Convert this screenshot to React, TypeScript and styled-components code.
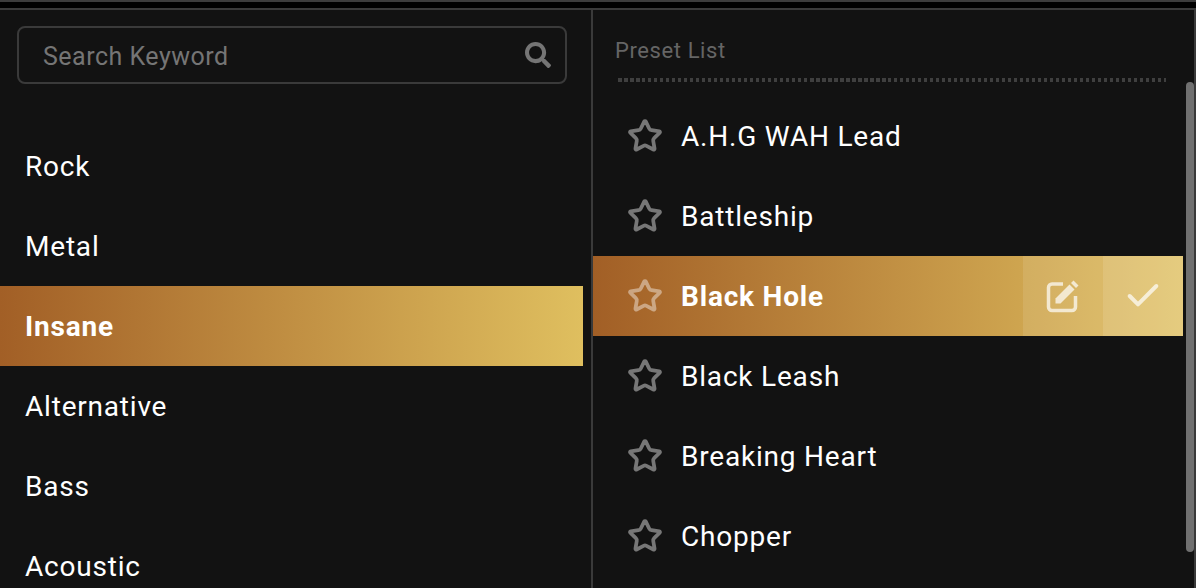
import styled, { createGlobalStyle } from 'styled-components';
import { FaSearch } from 'react-icons/fa';
import { Star, Check } from 'lucide-react';

const GlobalStyle = createGlobalStyle`
  html, body {
    margin: 0;
    height: 588px;
    overflow: hidden;
    background: #000;
    font-family: Roboto, "Liberation Sans", sans-serif;
  }
`;

const categories = ['Rock', 'Metal', 'Insane', 'Alternative', 'Bass', 'Acoustic'];
const presets = ['A.H.G WAH Lead', 'Battleship', 'Black Hole', 'Black Leash', 'Breaking Heart', 'Chopper'];

const Page = styled.div`
  width: 1196px;
  height: 588px;
  overflow: hidden;
  display: flex;
  flex-direction: column;
  box-sizing: border-box;
  border-top: 2px solid #3c3c3c;
  padding-top: 6px;
`;

const Panel = styled.div`
  flex: 1;
  min-height: 0;
  display: grid;
  grid-template-columns: 591px 1fr;
  background: #121212;
  border-top: 2px solid #3a3a3a;
  border-right: 2px solid #3a3a3a;
`;

const LeftColumn = styled.div`
  min-width: 0;
  overflow: hidden;
`;

const SearchBox = styled.div`
  box-sizing: border-box;
  width: 550px;
  height: 58px;
  margin: 16px 0 0 17px;
  padding: 0 14px 0 24px;
  display: flex;
  align-items: center;
  justify-content: space-between;
  border: 2px solid #3a3a3a;
  border-radius: 8px;
  color: #757575;
  font-size: 25px;
  letter-spacing: 0.5px;
`;

const SearchText = styled.span`
  padding-top: 3px;
`;

const CategoryList = styled.div`
  margin-top: 42px;
  width: 583px;
`;

const Row = styled.div<{ $active?: boolean }>`
  height: 80px;
  display: flex;
  align-items: center;
  color: #fff;
  font-size: 28px;
  letter-spacing: 0.8px;
  font-weight: ${(p) => (p.$active ? 700 : 400)};
`;

const CategoryRow = styled(Row)`
  padding-left: 25px;
  background: ${(p) => (p.$active ? 'linear-gradient(90deg, #a25f26 0%, #dfbf5f 100%)' : 'none')};
`;

const RightColumn = styled.div`
  position: relative;
  min-width: 0;
  overflow: hidden;
  border-left: 2px solid #3a3a3a;
`;

const ListHeading = styled.div`
  margin: 29px 0 0 22px;
  height: 24px;
  line-height: 24px;
  color: #656565;
  font-size: 22px;
  letter-spacing: 0.6px;
`;

const DottedRule = styled.div`
  width: 548px;
  height: 4px;
  margin: 15px 0 0 25px;
  background: repeating-linear-gradient(90deg, #3f3f3f 0 3.5px, transparent 3.5px 6px);
`;

const PresetList = styled.div`
  margin-top: 14px;
  width: 590px;
`;

const PresetRow = styled(Row)`
  padding-left: 34px;
  background: ${(p) => (p.$active ? 'linear-gradient(90deg, #a25f26 0%, #dfbf5f 100%)' : 'none')};
`;

const StarIcon = styled(Star)<{ $active?: boolean }>`
  flex: none;
  margin-right: 18px;
  color: ${(p) => (p.$active ? 'rgba(255, 255, 255, 0.42)' : '#777')};
`;

const PresetName = styled.span`
  flex: 1;
`;

const RowAction = styled.div<{ $strong?: boolean }>`
  width: 80px;
  height: 80px;
  display: flex;
  align-items: center;
  justify-content: center;
  color: rgba(255, 255, 255, 0.7);
  background: rgba(255, 255, 255, ${(p) => (p.$strong ? 0.2 : 0.1)});
`;

const ScrollThumb = styled.div`
  position: absolute;
  top: 72px;
  right: 0;
  width: 8px;
  height: 470px;
  border-radius: 4px;
  background: #707070;
`;

const EditIcon = () => (
  <svg width="34" height="34" viewBox="0 0 34 34" fill="none">
    <path
      d="M17 5H6A3.500 3.500 0 0 0 2.500 8.500V28A3.500 3.500 0 0 0 6 31.500H26A3.500 3.500 0 0 0 29.500 28V17"
      stroke="currentColor"
      strokeWidth="3.500"
    />
    <path d="M9.500 19.500L23.500 5.500L28.500 10.500L14.500 24.500H9.500Z" fill="currentColor" />
    <path d="M25 4L27.500 1.500L32.500 6.500L30 9Z" fill="currentColor" />
  </svg>
);

export default function App() {
  return (
    <Page>
      <GlobalStyle />
      <Panel>
        <LeftColumn>
          <SearchBox>
            <SearchText>Search Keyword</SearchText>
            <FaSearch size={26} color="#757575" />
          </SearchBox>
          <CategoryList>
            {categories.map((name) => (
              <CategoryRow key={name} $active={name === 'Insane'}>
                {name}
              </CategoryRow>
            ))}
          </CategoryList>
        </LeftColumn>
        <RightColumn>
          <ListHeading>Preset List</ListHeading>
          <DottedRule />
          <PresetList>
            {presets.map((name) => {
              const active = name === 'Black Hole';
              return (
                <PresetRow key={name} $active={active}>
                  <StarIcon $active={active} size={36} strokeWidth={2.5} />
                  <PresetName>{name}</PresetName>
                  {active && (
                    <>
                      <RowAction>
                        <EditIcon />
                      </RowAction>
                      <RowAction $strong>
                        <Check size={40} strokeWidth={2.4} />
                      </RowAction>
                    </>
                  )}
                </PresetRow>
              );
            })}
          </PresetList>
          <ScrollThumb />
        </RightColumn>
      </Panel>
    </Page>
  );
}
